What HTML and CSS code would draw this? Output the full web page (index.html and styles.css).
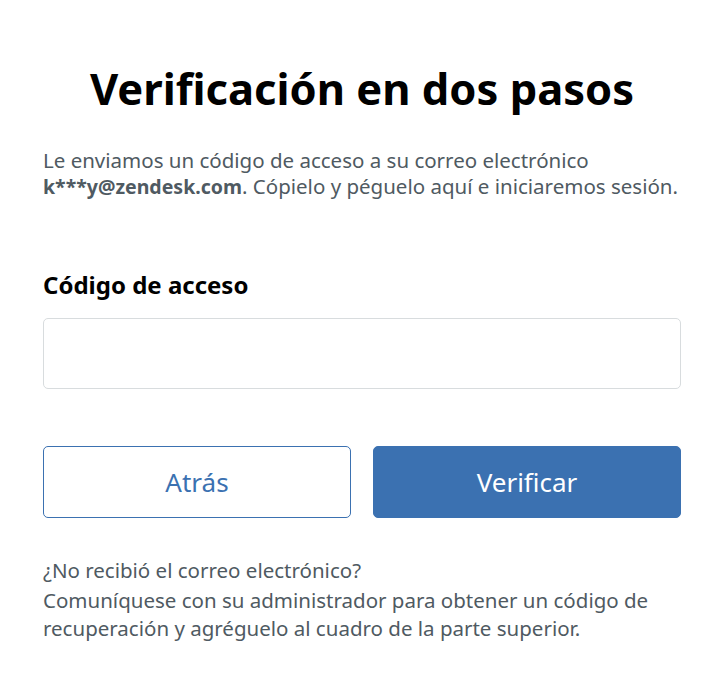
FILE: index.html
```html
<!DOCTYPE html>
<html lang="es">
<head>
<meta charset="UTF-8"/>
<title>Verificación en dos pasos</title>
<link rel="stylesheet" href="styles.css">
</head>
<body>
<main class="card">
  <h1 class="title">Verificación en dos pasos</h1>
  <p class="intro">Le enviamos un código de acceso a su correo electrónico <b>k***y@zendesk.com</b>. Cópielo y péguelo aquí e iniciaremos sesión.</p>

  <label class="label" for="code">Código de acceso</label>
  <input class="field" id="code" type="text">

  <div class="actions">
    <button class="btn btn-back" type="button">Atrás</button>
    <button class="btn btn-primary" type="submit">Verificar</button>
  </div>

  <p class="help-q">¿No recibió el correo electrónico?</p>
  <p class="help">Comuníquese con su administrador para obtener un código de recuperación y agréguelo al cuadro de la parte superior.</p>
</main>
</body>
</html>
```

FILE: styles.css
```css
body {
    margin: 0;
    background: #fff;
    font-family: "Noto Sans", "Open Sans", sans-serif;
    color: #4f5a62;
}
.card {
    width: 638px;
    margin-left: 43px;
    padding-top: 58px;
}
.title {
    margin: 0;
    font-size: 43.5px;
    line-height: 60px;
    font-weight: 700;
    color: #000;
    text-align: center;
}
.intro {
    margin: 29px 0 0;
    font-size: 20.5px;
    line-height: 26px;
}
.intro b {
    font-size: 19.5px;
    font-weight: 700;
}
.label {
    display: block;
    margin-top: 70px;
    font-size: 24px;
    line-height: 30px;
    font-weight: 700;
    color: #000;
}
.field {
    display: block;
    box-sizing: border-box;
    width: 100%;
    height: 71px;
    margin-top: 18px;
    border: 1px solid #d8dcde;
    border-radius: 5px;
    font: inherit;
}
.actions {
    display: flex;
    gap: 22px;
    margin-top: 57px;
}
.btn {
    flex: 1;
    height: 72px;
    border-radius: 5px;
    font-family: inherit;
    font-size: 26px;
}
.btn-back {
    background: #fff;
    border: 1px solid #3b71b1;
    color: #3b71b1;
}
.btn-primary {
    background: #3b71b1;
    border: 1px solid #3b71b1;
    color: #fff;
}
.help-q {
    margin: 38px 0 0;
    font-size: 20.5px;
    line-height: 28px;
}
.help {
    margin: 2px 0 0;
    font-size: 20.5px;
    line-height: 28px;
}
```
